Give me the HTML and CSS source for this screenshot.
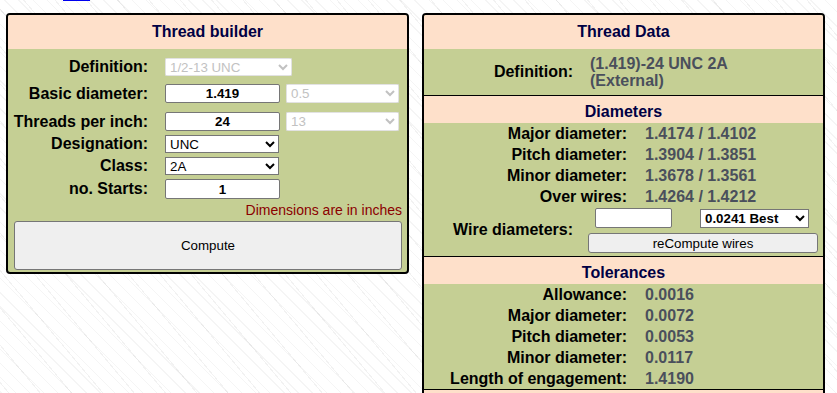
FILE: index.html
```html
<!DOCTYPE html>
<html lang="en">
<head>
    <meta charset="UTF-8">
    <meta name="viewport" content="width=device-width, initial-scale=1.0">
    <title>Thread builder</title>
    <link rel="stylesheet" href="styles.css">
</head>
<body>
    <div class="topbar"><span class="link-tail"></span></div>

    <div class="panels">
        <div class="panel">
            <div class="panel-head">Thread builder</div>
            <div class="builder-body">
                <div class="field">
                    <span class="field-label">Definition:</span>
                    <span class="sel-wrap"><select class="ctl sel-def" disabled><option>1/2-13 UNC</option></select></span>
                </div>
                <div class="field spaced">
                    <span class="field-label">Basic diameter:</span>
                    <input class="ctl num" type="text" value="1.419">
                    <span class="sel-wrap side"><select class="ctl sel-side" disabled><option>0.5</option></select></span>
                </div>
                <div class="field spaced-more">
                    <span class="field-label">Threads per inch:</span>
                    <input class="ctl num" type="text" value="24">
                    <span class="sel-wrap side"><select class="ctl sel-side" disabled><option>13</option></select></span>
                </div>
                <div class="field">
                    <span class="field-label">Designation:</span>
                    <select class="ctl sel-des"><option>UNC</option><option>UNF</option><option>UNEF</option></select>
                </div>
                <div class="field">
                    <span class="field-label">Class:</span>
                    <select class="ctl sel-des"><option>2A</option><option>1A</option><option>3A</option></select>
                </div>
                <div class="field">
                    <span class="field-label">no. Starts:</span>
                    <input class="ctl num tall" type="text" value="1">
                </div>
                <div class="note">Dimensions are in inches</div>
                <button class="ctl compute">Compute</button>
            </div>
        </div>

        <div class="panel">
            <div class="panel-head">Thread Data</div>
            <div class="def-row">
                <span class="def-label">Definition:</span>
                <span class="def-value">(1.419)-24 UNC 2A<br>(External)</span>
            </div>

            <div class="sub-head">Diameters</div>
            <div class="item"><span class="item-label">Major diameter:</span><span class="item-value">1.4174 / 1.4102</span></div>
            <div class="item"><span class="item-label">Pitch diameter:</span><span class="item-value">1.3904 / 1.3851</span></div>
            <div class="item"><span class="item-label">Minor diameter:</span><span class="item-value">1.3678 / 1.3561</span></div>
            <div class="item"><span class="item-label">Over wires:</span><span class="item-value">1.4264 / 1.4212</span></div>
            <div class="wire">
                <span class="wire-label">Wire diameters:</span>
                <div class="wire-ctls">
                    <div class="wire-top">
                        <input class="ctl wire-input" type="text" value="">
                        <select class="ctl wire-sel"><option>0.0241 Best</option><option>0.0250</option><option>0.0200</option></select>
                    </div>
                    <button class="ctl wire-btn">reCompute wires</button>
                </div>
            </div>

            <div class="sub-head">Tolerances</div>
            <div class="item"><span class="item-label">Allowance:</span><span class="item-value">0.0016</span></div>
            <div class="item"><span class="item-label">Major diameter:</span><span class="item-value">0.0072</span></div>
            <div class="item"><span class="item-label">Pitch diameter:</span><span class="item-value">0.0053</span></div>
            <div class="item"><span class="item-label">Minor diameter:</span><span class="item-value">0.0117</span></div>
            <div class="item"><span class="item-label">Length of engagement:</span><span class="item-value">1.4190</span></div>

            <div class="sub-head"></div>
        </div>
    </div>
</body>
</html>
```

FILE: styles.css
```css
body {
    margin: 0;
    font-family: "Liberation Sans", Arial, sans-serif;
    color: #000;
    background-color: #fff;
    background-image:
        repeating-linear-gradient(45deg, transparent 0 9px, rgba(0,0,0,0.04) 9px 10px),
        repeating-linear-gradient(50deg, transparent 0 23px, rgba(0,0,0,0.05) 23px 24px);
}
.topbar {
    height: 2px;
}
.link-tail {
    display: block;
    width: 27px;
    height: 1px;
    margin-left: 63px;
    background-color: #0000ee;
}
.panels {
    display: flex;
    align-items: flex-start;
    gap: 13px;
    padding: 11px 0 0 6px;
}
.panel {
    width: 403px;
    box-sizing: border-box;
    border: 2px solid #000;
    border-radius: 4px;
    background-color: #c5cf94;
    overflow: hidden;
}
.panel-head {
    height: 34px;
    display: flex;
    align-items: center;
    justify-content: center;
    background-color: #fee0ca;
    color: #000044;
    font-size: 16px;
    font-weight: bold;
}

/* builder form */
.builder-body {
    padding: 9px 0 2px;
}
.field {
    display: flex;
    align-items: center;
    margin-top: 4px;
}
.field:first-child {
    margin-top: 0;
}
.field.spaced {
    margin-top: 8px;
}
.field.spaced-more {
    margin-top: 9px;
}
.field-label {
    width: 140px;
    margin-right: 17px;
    text-align: right;
    font-size: 16px;
    font-weight: bold;
}
.ctl {
    font-family: "Liberation Sans", Arial, sans-serif;
    font-size: 13.33px;
    box-sizing: border-box;
    margin: 0;
}
.num {
    width: 115px;
    height: 19px;
    padding: 0;
    border: 1px solid #767676;
    border-radius: 2px;
    text-align: center;
    font-weight: bold;
    background-color: #fff;
}
.num.tall {
    height: 20px;
}
.sel-wrap {
    display: flex;
    background-color: #fff;
    border-radius: 3px;
}
.sel-wrap.side {
    margin-left: 6px;
}
select.ctl {
    background-color: #fff;
}
select.ctl:disabled {
    color: #a8a8a8;
}
.sel-def {
    width: 127px;
    height: 18px;
}
.sel-side {
    width: 113px;
    height: 19px;
}
.sel-des {
    width: 114px;
    height: 18px;
}
.note {
    margin: 3px 5px 0 0;
    text-align: right;
    font-size: 14px;
    line-height: 16px;
    color: #8b0000;
}
.compute {
    display: block;
    width: 388px;
    height: 49px;
    margin: 3px 0 0 6px;
    background-color: #efefef;
    border: 1px solid #767676;
    border-radius: 3px;
    color: #000;
}

/* data panel */
.def-row {
    height: 46px;
    display: flex;
    align-items: center;
}
.def-label {
    width: 149px;
    margin-right: 17px;
    text-align: right;
    font-size: 16px;
    font-weight: bold;
}
.def-value {
    font-size: 16px;
    line-height: 17px;
    font-weight: bold;
    color: #4a4f5c;
}
.sub-head {
    height: 28px;
    box-sizing: border-box;
    padding-top: 4px;
    border-top: 1px solid #000;
    display: flex;
    align-items: center;
    justify-content: center;
    background-color: #fee0ca;
    color: #000044;
    font-size: 16px;
    font-weight: bold;
}
.item {
    height: 21px;
    display: grid;
    grid-template-columns: 203px auto;
    column-gap: 18px;
    align-items: center;
    font-size: 16px;
    font-weight: bold;
}
.item-label {
    text-align: right;
}
.item-value {
    color: #4a4f5c;
}
.wire {
    height: 49px;
    display: flex;
}
.wire-label {
    width: 149px;
    align-self: center;
    padding-bottom: 4px;
    text-align: right;
    font-size: 16px;
    font-weight: bold;
}
.wire-ctls {
    width: 230px;
    margin-left: 15px;
    padding-top: 1px;
}
.wire-top {
    display: flex;
    align-items: flex-start;
}
.wire-input {
    width: 77px;
    height: 20px;
    margin-left: 7px;
    padding: 0 3px;
    border: 1px solid #767676;
    border-radius: 2px;
    background-color: #fff;
}
.wire-sel {
    width: 109px;
    height: 19px;
    margin: 1px 0 0 28px;
    font-weight: bold;
}
.wire-btn {
    display: block;
    width: 230px;
    height: 20px;
    margin-top: 5px;
    padding: 0;
    background-color: #efefef;
    border: 1px solid #767676;
    border-radius: 3px;
    color: #000;
}
```
